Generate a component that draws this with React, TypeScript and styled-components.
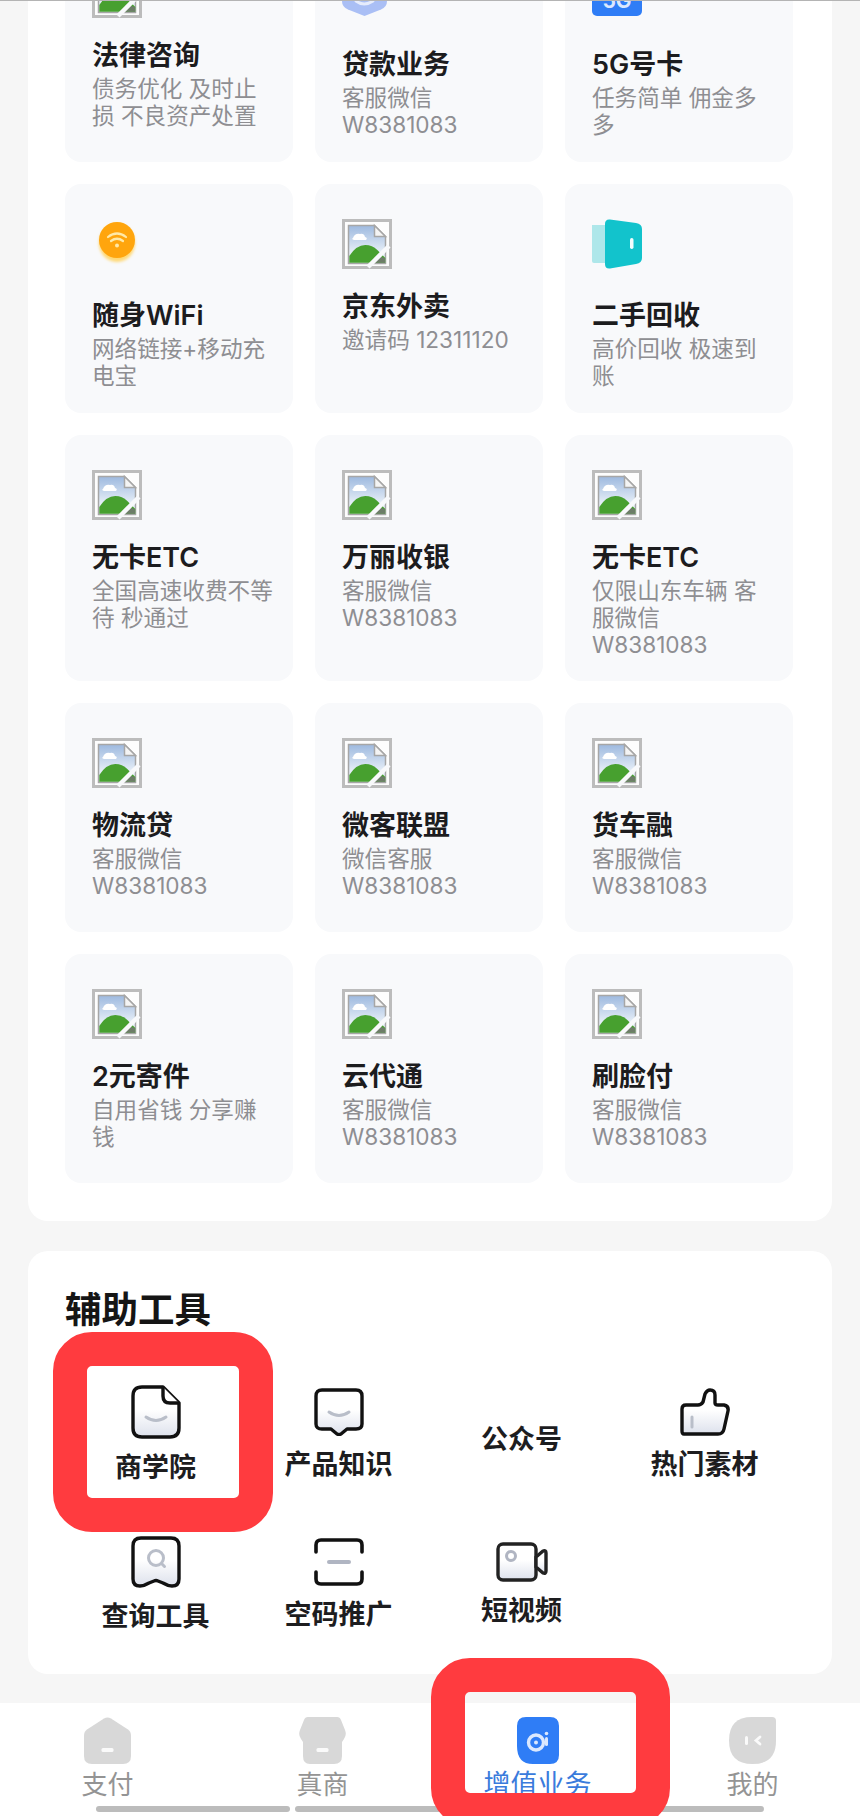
import { ReactElement, ReactNode } from "react"

import styled, { createGlobalStyle } from "styled-components"

const GlobalStyle = createGlobalStyle`
  html, body {
    margin: 0;
    padding: 0;
    background: #f6f6f6;
    font-family: Inter, "Noto Sans CJK SC", sans-serif;
  }
`

const Page = styled.div`
  position: relative;
  display: flex;
  flex-direction: column;
  box-sizing: border-box;
  width: 860px;
  height: 1816px;
  overflow: hidden;
  background: #f6f6f6;
  border-top: 1px solid #b4b4b4;
`

const Scroller = styled.div`
  flex: 1;
  min-height: 0;
  overflow: hidden;
`

const Panel = styled.section`
  margin: -68px 28px 0;
  padding: 0 39px 38px 37px;
  background: #fff;
  border-radius: 0 0 20px 20px;
`

const Grid = styled.div`
  display: grid;
  grid-template-columns: repeat(3, 228px);
  gap: 22px;
`

const Card = styled.div`
  box-sizing: border-box;
  min-height: 229px;
  padding: 35px 17px 23px 27px;
  background: #f8f9fb;
  border-radius: 16px;
`

const CardImage = styled.div<{ $tall: boolean }>`
  height: ${({ $tall }) => ($tall ? 59 : 50)}px;
  margin-bottom: 19px;

  svg {
    display: block;
  }
`

const CardTitle = styled.div`
  font-size: 27px;
  line-height: 38px;
  font-weight: 600;
  color: #1c1c1e;
`

const CardDesc = styled.div`
  font-size: 22.6px;
  line-height: 27px;
  color: #8e8e92;
`

const Tools = styled.section`
  margin: 30px 28px 0;
  padding: 39px 35px 34px 36px;
  background: #fff;
  border-radius: 20px;
`

const ToolsTitle = styled.h2`
  margin: 0 0 50px 1px;
  font-size: 36.5px;
  line-height: 40px;
  font-weight: 700;
  color: #151515;
`

const ToolGrid = styled.div`
  display: grid;
  grid-template-columns: repeat(4, 183px);
  grid-auto-rows: 110px;
  row-gap: 40px;
`

const Tool = styled.div<{ $shift?: number }>`
  display: flex;
  flex-direction: column;
  align-items: center;
  justify-content: center;
  gap: 11px;
  padding-top: ${({ $shift }) => $shift ?? 0}px;

  svg {
    display: block;
  }
`

const ToolLabel = styled.span`
  font-size: 27px;
  line-height: 36px;
  font-weight: 600;
  color: #1d1d1f;
`

const TabBar = styled.nav`
  display: flex;
  flex-direction: column;
  flex: none;
  height: 113px;
  background: #fff;
`

const Tabs = styled.div`
  display: grid;
  grid-template-columns: repeat(4, 215px);
  padding-top: 14px;
`

const Tab = styled.div`
  display: flex;
  flex-direction: column;
  align-items: center;
  gap: 5px;

  svg {
    display: block;
  }
`

const TabLabel = styled.span<{ $active?: boolean }>`
  font-size: ${({ $active }) => ($active ? 27 : 26)}px;
  line-height: 32px;
  color: ${({ $active }) => ($active ? "#3a7bdc" : "#949494")};
`

const Indicator = styled.div`
  display: flex;
  gap: 5px;
  margin-top: 5px;
  padding-left: 96px;
`

const IndicatorBar = styled.div<{ $width: number }>`
  width: ${({ $width }) => $width}px;
  height: 6px;
  background: #bcbcbc;
  border-radius: 3px;
`

// red annotation frames drawn over the screenshot
const Frame = styled.div<{ $left: number; $top: number; $w: number; $h: number }>`
  position: absolute;
  left: ${({ $left }) => $left}px;
  top: ${({ $top }) => $top}px;
  width: ${({ $w }) => $w}px;
  height: ${({ $h }) => $h}px;
  border: 34px solid #ff3b3f;
  border-radius: 39px;
`

function BrokenImage(): ReactElement {
  return (
    <svg width="50" height="50" viewBox="0 0 50 50">
      <defs>
        <linearGradient id="sky" x1="0" y1="0" x2="0" y2="1">
          <stop offset="0" stopColor="#9db9df" />
          <stop offset="0.7" stopColor="#e6eef7" />
        </linearGradient>
      </defs>
      <rect x="1.500" y="1.500" width="47" height="47" fill="#fdfdfd" stroke="#bcbcbc" strokeWidth="3" />
      <path d="M6.500 6.500h26l11 11v27h-37z" fill="url(#sky)" stroke="#a6a6a6" strokeWidth="1.500" />
      <path d="M32.500 6.500v11h11z" fill="#f4f4f4" stroke="#a6a6a6" strokeWidth="1.500" />
      <path d="M11 19q2-5 7-4 4-1 5 3 3 1 1 3H12q-3-1-1-2z" fill="#fff" />
      <path d="M7.300 43.700V37q7-11 16-11 7 0 12 5l8 8v4.700z" fill="#47a02f" />
      <path d="M27 43.700l12-6 4 1.500v4.500z" fill="#6d7d68" />
      <path d="M26 48L47 27" stroke="#f8f9fb" strokeWidth="4.500" />
    </svg>
  )
}

function ShieldIcon(): ReactElement {
  return (
    <svg width="50" height="59" viewBox="0 0 50 59">
      <path d="M0 6q0-4 4-4h37q4 0 4 4v27q0 6-6 8.500L22.500 48 6 41.500Q0 39 0 33z" fill="#aabff5" />
      <path d="M14 33q8 6 17 0" fill="none" stroke="#e6ecfc" strokeWidth="3" strokeLinecap="round" />
    </svg>
  )
}

function SimIcon(): ReactElement {
  return (
    <svg width="50" height="59" viewBox="0 0 50 59">
      <rect x="0" y="0" width="50" height="48" rx="5" fill="#2f7df6" />
      <text x="25" y="40" textAnchor="middle" fontSize="21" fontWeight="700" fill="#dbe8fe">
        5G
      </text>
    </svg>
  )
}

function WifiIcon(): ReactElement {
  return (
    <svg width="50" height="59" viewBox="0 0 50 59">
      <defs>
        <filter id="glow" x="-30%" y="-30%" width="160%" height="160%">
          <feGaussianBlur stdDeviation="1.500" />
        </filter>
      </defs>
      <ellipse cx="25" cy="24" rx="18" ry="19" fill="#ffd873" filter="url(#glow)" />
      <circle cx="25" cy="21" r="18" fill="#ffa50d" />
      <path d="M16 18q9-7 18 0M19 22q6-4.500 12 0" fill="none" stroke="#ffe9a8" strokeWidth="2.200" strokeLinecap="round" />
      <circle cx="25" cy="26.500" r="2" fill="#ffe9a8" />
    </svg>
  )
}

function WalletIcon(): ReactElement {
  return (
    <svg width="50" height="59" viewBox="0 0 50 59">
      <path d="M0 6h14v38H2q-2 0-2-2z" fill="#aee7ea" />
      <path d="M13 5q0-5 5-4.500l26 3.500q6 1 6 6v29q0 5-6 6l-26 4.500q-5 .5-5-4.500z" fill="#12c3cc" />
      <rect x="38" y="19" width="3.500" height="11" rx="1.700" fill="#f2fdfd" />
    </svg>
  )
}

const stroke = { fill: "url(#toolFill)", stroke: "#111", strokeWidth: 3.4, strokeLinejoin: "round" as const }
const soft = { fill: "none", stroke: "#b9bec9", strokeWidth: 3, strokeLinecap: "round" as const }

function ToolDefs(): ReactElement {
  return (
    <svg width="0" height="0" style={{ position: "absolute" }}>
      <defs>
        <linearGradient id="toolFill" x1="0" y1="0" x2="0" y2="1">
          <stop offset="0.45" stopColor="#ffffff" />
          <stop offset="1" stopColor="#dde1ec" />
        </linearGradient>
      </defs>
    </svg>
  )
}

function DocIcon(): ReactElement {
  return (
    <svg width="50" height="54" viewBox="0 0 50 54">
      <path d="M11 2h21l16 16v25q0 9-9 9H11q-9 0-9-9V11q0-9 9-9z" {...stroke} />
      <path d="M32 2v9q0 7 7 7h9" fill="#fff" stroke="#111" strokeWidth="3.400" strokeLinejoin="round" />
      <path d="M15 32q10 7 20 0" {...soft} />
    </svg>
  )
}

function BubbleIcon(): ReactElement {
  return (
    <svg width="50" height="48" viewBox="0 0 50 48">
      <path d="M8 2h34q6 0 6 6v28q0 5-6 5h-9l-6 5q-2 1-4 0l-6-5H8q-6 0-6-5V8q0-6 6-6z" {...stroke} />
      <path d="M15 24q10 7 20 0" {...soft} />
    </svg>
  )
}

function ThumbIcon(): ReactElement {
  return (
    <svg width="50" height="48" viewBox="0 0 50 48">
      <path d="M4 46q-2 0-2-3V21q0-4 4-4h12q3 0 5-3l2-8q2-4 5-4 5 0 5 5v8q0 2 3 2h6q5 1 4 6l-4 18q-1 5-6 5z" {...stroke} />
      <path d="M12 29v10" {...soft} />
    </svg>
  )
}

function SearchIcon(): ReactElement {
  return (
    <svg width="50" height="52" viewBox="0 0 50 52">
      <path d="M10 2h30q8 0 8 8v33q0 7-7 7-4 0-9-3l-5-2q-2-1-4 0l-5 2q-5 3-9 3-7 0-7-7V10q0-8 8-8z" {...stroke} />
      <circle cx="25" cy="22" r="7.500" {...soft} />
      <path d="M31 28l2.500 2.500" {...soft} />
    </svg>
  )
}

function ScanIcon(): ReactElement {
  return (
    <svg width="50" height="48" viewBox="0 0 50 48">
      <path d="M2 14V7q0-5 5-5h36q5 0 5 5v7M2 34v7q0 5 5 5h36q5 0 5-5v-7" fill="none" stroke="#111" strokeWidth="3.600" strokeLinecap="round" />
      <path d="M15 24h20" fill="none" stroke="#b0b5c2" strokeWidth="4" strokeLinecap="round" />
    </svg>
  )
}

function VideoIcon(): ReactElement {
  return (
    <svg width="52" height="40" viewBox="0 0 52 40">
      <rect x="2" y="2" width="38" height="36" rx="5" {...stroke} stroke="#222" />
      <path d="M40 15l7-6q3-1 3 2v18q0 3-3 2l-7-6z" {...stroke} stroke="#222" />
      <circle cx="15" cy="14" r="4.500" fill="none" stroke="#b0b5c2" strokeWidth="3" />
    </svg>
  )
}

function HomeTabIcon(): ReactElement {
  return (
    <svg width="47" height="47" viewBox="0 0 47 47">
      <path d="M20 1.500q3.500-2 7 0l17 11q3 2 3 6V39q0 8-8 8H8q-8 0-8-8V18.500q0-4 3-6z" fill="#d8d8d8" />
      <rect x="17.500" y="31" width="12" height="4" rx="1.500" fill="#fafafa" />
    </svg>
  )
}

function ShopTabIcon(): ReactElement {
  return (
    <svg width="47" height="47" viewBox="0 0 47 47">
      <path d="M9 0h29q3 0 4 3l4 10q2 5-1 9l-2 3v14q0 8-8 8H11q-7 0-7-8V25l-2-3Q-1 18 1 13L5 3q1-3 4-3z" fill="#d8d8d8" />
      <rect x="17.500" y="31" width="12" height="4" rx="1.500" fill="#fafafa" />
    </svg>
  )
}

function ServiceTabIcon(): ReactElement {
  return (
    <svg width="42" height="47" viewBox="0 0 42 47">
      <path d="M9 0h24q9 0 9 9v29q0 9-9 9H16Q0 47 0 29V9q0-9 9-9z" fill="#2f7df6" />
      <circle cx="19" cy="25.500" r="7.500" fill="none" stroke="#dbe8fe" strokeWidth="3.400" />
      <circle cx="19" cy="25.500" r="2" fill="#dbe8fe" />
      <rect x="28" y="20" width="3" height="9" rx="1.500" fill="#dbe8fe" />
      <circle cx="29.500" cy="16.500" r="1.800" fill="#dbe8fe" />
    </svg>
  )
}

function MeTabIcon(): ReactElement {
  return (
    <svg width="47" height="47" viewBox="0 0 47 47">
      <path d="M23 0h20q4 0 4 4v20q0 23-23.500 23Q0 47 0 23.500 0 0 23 0z" fill="#d8d8d8" />
      <rect x="16" y="19" width="3" height="9" rx="1.500" fill="#fafafa" />
      <path d="M31 20l-4 3.500 4 3.500" fill="none" stroke="#fafafa" strokeWidth="2.800" strokeLinecap="round" />
    </svg>
  )
}

interface Service {
  title: string
  desc: string
  icon?: ReactNode
}

const wechat = "客服微信 W8381083"

const services: Service[] = [
  { title: "法律咨询", desc: "债务优化 及时止损 不良资产处置" },
  { title: "贷款业务", desc: wechat, icon: <ShieldIcon /> },
  { title: "5G号卡", desc: "任务简单 佣金多多", icon: <SimIcon /> },
  { title: "随身WiFi", desc: "网络链接+移动充电宝", icon: <WifiIcon /> },
  { title: "京东外卖", desc: "邀请码 12311120" },
  { title: "二手回收", desc: "高价回收 极速到账", icon: <WalletIcon /> },
  { title: "无卡ETC", desc: "全国高速收费不等待 秒通过" },
  { title: "万丽收银", desc: wechat },
  { title: "无卡ETC", desc: "仅限山东车辆 客服微信 W8381083" },
  { title: "物流贷", desc: wechat },
  { title: "微客联盟", desc: "微信客服 W8381083" },
  { title: "货车融", desc: wechat },
  { title: "2元寄件", desc: "自用省钱 分享赚钱" },
  { title: "云代通", desc: wechat },
  { title: "刷脸付", desc: wechat },
]

const tools: { label: string; icon?: ReactNode; shift?: number }[] = [
  { label: "商学院", icon: <DocIcon /> },
  { label: "产品知识", icon: <BubbleIcon /> },
  { label: "公众号", shift: 10 },
  { label: "热门素材", icon: <ThumbIcon /> },
  { label: "查询工具", icon: <SearchIcon /> },
  { label: "空码推广", icon: <ScanIcon /> },
  { label: "短视频", icon: <VideoIcon /> },
]

const tabs: { label: string; icon: ReactNode; active?: boolean }[] = [
  { label: "支付", icon: <HomeTabIcon /> },
  { label: "真商", icon: <ShopTabIcon /> },
  { label: "增值业务", icon: <ServiceTabIcon />, active: true },
  { label: "我的", icon: <MeTabIcon /> },
]

function App(): ReactElement {
  return (
    <Page>
      <GlobalStyle />
      <ToolDefs />
      <Scroller>
        <Panel>
          <Grid>
            {services.map((item, i) => (
              <Card key={i}>
                <CardImage $tall={!!item.icon}>{item.icon ?? <BrokenImage />}</CardImage>
                <CardTitle>{item.title}</CardTitle>
                <CardDesc>{item.desc}</CardDesc>
              </Card>
            ))}
          </Grid>
        </Panel>
        <Tools>
          <ToolsTitle>辅助工具</ToolsTitle>
          <ToolGrid>
            {tools.map((tool) => (
              <Tool key={tool.label} $shift={tool.shift}>
                {tool.icon}
                <ToolLabel>{tool.label}</ToolLabel>
              </Tool>
            ))}
          </ToolGrid>
        </Tools>
      </Scroller>
      <TabBar>
        <Tabs>
          {tabs.map((tab) => (
            <Tab key={tab.label}>
              {tab.icon}
              <TabLabel $active={tab.active}>{tab.label}</TabLabel>
            </Tab>
          ))}
        </Tabs>
        <Indicator>
          <IndicatorBar $width={194} />
          <IndicatorBar $width={469} />
        </Indicator>
      </TabBar>
      <Frame $left={53} $top={1331} $w={152} $h={132} />
      <Frame $left={431} $top={1657} $w={171} $h={101} />
    </Page>
  )
}

export default App
